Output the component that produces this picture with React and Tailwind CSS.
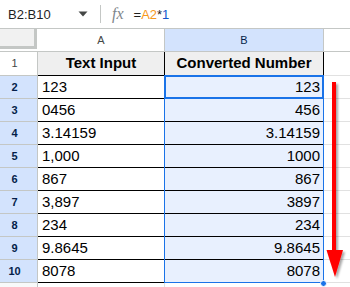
import React from "react";

const rows = [
  ["123", "123"],
  ["0456", "456"],
  ["3.14159", "3.14159"],
  ["1,000", "1000"],
  ["867", "867"],
  ["3,897", "3897"],
  ["234", "234"],
  ["9.8645", "9.8645"],
  ["8078", "8078"],
];

export default function App() {
  return (
    <div
      className="relative w-[350px] h-[287px] overflow-hidden bg-white text-[#1f1f1f]"
      style={{ fontFamily: '"Liberation Sans", Arial, sans-serif' }}
    >
      {/* formula bar */}
      <div className="flex h-[29px] items-center border-b border-[#c4c7c5]">
        <div className="w-[72px] pl-[8px] text-[13px] leading-none text-[#1f1f1f]">B2:B10</div>
        <svg width="10" height="6" viewBox="0 0 10 6" className="ml-[6px]">
          <path d="M0.5 0.5 H9.5 L5 5.5 Z" fill="#444746" />
        </svg>
        <div className="ml-[12px] h-[18px] w-px bg-[#c4c7c5]" />
        <div
          className="ml-[11px] text-[16px] italic leading-none text-[#80868b]"
          style={{ fontFamily: '"Liberation Serif", "Times New Roman", serif' }}
        >
          fx
        </div>
        <div className="ml-[10px] text-[13px] leading-none">
          <span className="text-[#1f1f1f]">=</span>
          <span className="text-[#f7981d]">A2</span>
          <span className="text-[#1f1f1f]">*</span>
          <span className="text-[#1155cc]">1</span>
        </div>
      </div>

      {/* column headers */}
      <div className="flex h-[23px] border-b border-[#c4c7c5] text-[11px] text-[#444746]">
        <div className="w-[38px] shrink-0 bg-white">
          <div className="h-[20px] w-[37px] border-r-[3px] border-b-[3px] border-[#c4c7c5] bg-[#f1f1f1]" />
        </div>
        <div className="flex w-[127px] shrink-0 items-center justify-center border-r border-[#c4c7c5] bg-white">
          A
        </div>
        <div className="flex w-[159px] shrink-0 items-center justify-center border-r border-[#c4c7c5] bg-[#d3e3fd] text-[#041e49]">
          B
        </div>
        <div className="flex-1 bg-white" />
      </div>

      {/* row 1 */}
      <div className="flex h-[24px]">
        <div className="flex w-[38px] shrink-0 items-center justify-center border-r border-b border-[#c4c7c5] bg-white pr-[8px] text-[11px] text-[#444746]">
          1
        </div>
        <div className="flex w-[127px] shrink-0 items-center justify-center border-r border-b border-black bg-[#efefef] text-[15px] font-bold text-black">
          Text Input
        </div>
        <div className="flex w-[159px] shrink-0 items-center justify-center border-r border-b border-black bg-[#efefef] text-[15px] font-bold text-black">
          Converted Number
        </div>
        <div className="flex-1 border-b border-[#e1e1e1]" />
      </div>

      {rows.map(([a, b], i) => (
        <div key={i} className="flex h-[23px]">
          <div className="flex w-[38px] shrink-0 items-center justify-center border-r border-b border-[#c4c7c5] bg-[#d3e3fd] pr-[8px] text-[11px] font-bold text-[#041e49]">
            {i + 2}
          </div>
          <div className="flex w-[127px] shrink-0 items-center border-r border-b border-black bg-white pl-[4px] text-[15px] text-black">
            {a}
          </div>
          <div className="flex w-[159px] shrink-0 items-center justify-end border-r border-b border-black bg-[#e8f0fe] pr-[3px] text-[15px] text-black">
            {b}
          </div>
          <div className="flex-1 border-b border-[#e1e1e1]" />
        </div>
      ))}

      {/* row 11 partial */}
      <div className="flex h-[10px]">
        <div className="w-[38px] shrink-0 border-r border-[#c4c7c5] bg-[#f8f9fa]" />
        <div className="w-[127px] shrink-0 border-r border-[#e1e1e1]" />
        <div className="w-[159px] shrink-0 border-r border-[#e1e1e1]" />
        <div className="flex-1" />
      </div>

      {/* selection overlay */}
      <div className="pointer-events-none absolute left-[164px] top-[75px] h-[208px] w-[160px] border border-[#1a73e8]" />
      <div className="pointer-events-none absolute left-[164px] top-[75px] h-[24px] w-[160px] border-2 border-[#1a73e8]" />
      <div className="pointer-events-none absolute left-[320px] top-[280px] h-[7px] w-[7px] rounded-full border border-white bg-[#1a73e8]" />

      {/* red arrow */}
      <svg className="pointer-events-none absolute left-[322px] top-[78px]" width="28" height="204" viewBox="0 0 28 204">
        <defs>
          <filter id="sh" x="-50%" y="-10%" width="200%" height="120%">
            <feDropShadow dx="2" dy="2" stdDeviation="1.2" floodColor="#000" floodOpacity="0.35" />
          </filter>
        </defs>
        <g filter="url(#sh)">
          <rect x="10" y="4" width="4" height="172" fill="#ff0000" />
          <path d="M4.5 172 H21 L13 199 Z" fill="#ff0000" />
        </g>
      </svg>
    </div>
  );
}
